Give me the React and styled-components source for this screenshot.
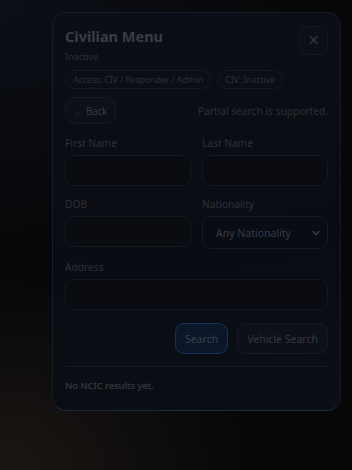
import styled, { createGlobalStyle } from "styled-components";

const Global = createGlobalStyle`
  html, body {
    margin: 0;
    padding: 0;
  }
  body {
    font-family: "Noto Sans", "Open Sans", sans-serif;
    background: #08090c;
  }
`;

const Page = styled.div`
  width: 352px;
  height: 470px;
  box-sizing: border-box;
  padding: 12px 11px 0 52px;
  background:
    radial-gradient(ellipse 260px 200px at 0% 100%, #1a1613 0%, rgba(26, 22, 19, 0) 100%),
    radial-gradient(ellipse 300px 260px at 0% 0%, #0c0f18 0%, rgba(12, 15, 24, 0) 100%),
    #070708;
`;

const Panel = styled.div`
  width: 289px;
  box-sizing: border-box;
  padding: 12px 12px 18px 12px;
  border-radius: 14px;
  border: 1px solid #141b27;
  border-bottom-color: #1a2a42;
  background: linear-gradient(170deg, #0b0e17 0%, #0a0c13 60%, #0b0e15 100%);
  display: flex;
  flex-direction: column;
`;

const Header = styled.div`
  display: flex;
  justify-content: space-between;
  align-items: flex-start;
`;

const TitleBlock = styled.div`
  display: flex;
  flex-direction: column;
`;

const Title = styled.h1`
  margin: 0;
  font-size: 14.5px;
  font-weight: 700;
  line-height: 22px;
  color: #383d46;
`;

const Status = styled.div`
  font-size: 9px;
  line-height: 14px;
  margin-top: 3px;
  color: #2a2e36;
`;

const CloseButton = styled.button`
  width: 29px;
  height: 29px;
  margin-top: 1px;
  border-radius: 9px;
  border: 1px solid #151920;
  background: #0c0f15;
  color: #353941;
  font-size: 15px;
  line-height: 1;
  display: flex;
  align-items: center;
  justify-content: center;
  padding: 0;
  font-family: "DejaVu Sans", sans-serif;
`;

const Chips = styled.div`
  display: flex;
  gap: 6px;
  margin-top: 6px;
`;

const Chip = styled.span`
  height: 19px;
  box-sizing: border-box;
  padding: 0 7px;
  border-radius: 10px;
  border: 1px solid #151920;
  background: #0b0e14;
  color: #2b2f37;
  font-size: 9px;
  letter-spacing: -0.2px;
  display: flex;
  align-items: center;
`;

const Toolbar = styled.div`
  display: flex;
  justify-content: space-between;
  align-items: center;
  margin-top: 8px;
`;

const GhostButton = styled.button`
  height: ${p => p.$h || 27}px;
  padding: 0 ${p => p.$px || 8}px;
  border-radius: 9px;
  border: 1px solid ${p => (p.$primary ? "#16315a" : "#151920")};
  background: ${p => (p.$primary ? "#0b1628" : "#0d1016")};
  color: ${p => (p.$primary ? "#3a4352" : "#353941")};
  font-family: inherit;
  font-size: ${p => p.$fs || 10.5}px;
  letter-spacing: ${p => (p.$tight ? "-0.3px" : "0")};
`;

const Hint = styled.span`
  font-size: 10.2px;
  color: #2a2f37;
`;

const Grid = styled.div`
  display: grid;
  grid-template-columns: 1fr 1fr;
  column-gap: 11px;
  row-gap: 11px;
  margin-top: 12px;
`;

const Field = styled.label`
  display: flex;
  flex-direction: column;
  gap: 4px;
  grid-column: ${p => (p.$wide ? "1 / -1" : "auto")};
`;

const Label = styled.span`
  font-size: 10.2px;
  line-height: 15px;
  color: #2d3139;
`;

const Input = styled.div`
  height: 31px;
  box-sizing: border-box;
  border-radius: 9px;
  border: 1px solid #13171e;
  background: #090b11;
`;

const Select = styled.div`
  height: 33px;
  box-sizing: border-box;
  border-radius: 9px;
  border: 1px solid #121b29;
  background: #090c13;
  display: flex;
  align-items: center;
  justify-content: space-between;
  padding: 0 5px 0 13px;
  color: #363b44;
  font-size: 10.5px;
`;

const Actions = styled.div`
  display: flex;
  justify-content: flex-end;
  gap: 9px;
  margin-top: 13px;
`;

const Divider = styled.hr`
  margin: 12px 0 0;
  border: 0;
  border-top: 1px solid #151920;
`;

const Empty = styled.div`
  margin-top: 12px;
  font-size: 9.5px;
  font-weight: 600;
  color: #31353d;
  letter-spacing: -0.2px;
`;

export default function App() {
  return (
    <Page>
      <Global />
      <Panel>
        <Header>
          <TitleBlock>
            <Title>Civilian Menu</Title>
            <Status>Inactive</Status>
          </TitleBlock>
          <CloseButton>×</CloseButton>
        </Header>
        <Chips>
          <Chip>Access: CIV / Responder / Admin</Chip>
          <Chip>CIV: Inactive</Chip>
        </Chips>
        <Toolbar>
          <GhostButton $fs={10} $tight>← Back</GhostButton>
          <Hint>Partial search is supported.</Hint>
        </Toolbar>
        <Grid>
          <Field>
            <Label>First Name</Label>
            <Input />
          </Field>
          <Field>
            <Label>Last Name</Label>
            <Input />
          </Field>
          <Field>
            <Label>DOB</Label>
            <Input />
          </Field>
          <Field>
            <Label>Nationality</Label>
            <Select>
              Any Nationality
              <svg width="12" height="12" viewBox="0 0 24 24" fill="none" stroke="#363b44" strokeWidth="3" strokeLinecap="round" strokeLinejoin="round">
                <path d="M6 9l6 6 6-6" />
              </svg>
            </Select>
          </Field>
          <Field $wide>
            <Label>Address</Label>
            <Input />
          </Field>
        </Grid>
        <Actions>
          <GhostButton $primary $h={31} $px={9}>Search</GhostButton>
          <GhostButton $h={31} $px={9}>Vehicle Search</GhostButton>
        </Actions>
        <Divider />
        <Empty>No NCIC results yet.</Empty>
      </Panel>
    </Page>
  );
}
